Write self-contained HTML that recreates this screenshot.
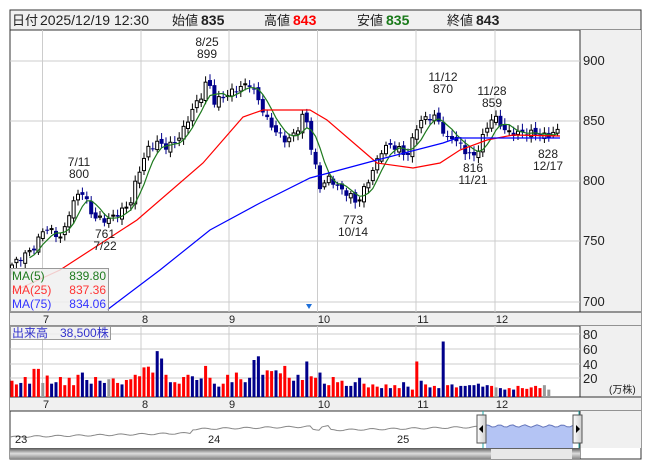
<!DOCTYPE html>
<html><head><meta charset="utf-8"><style>
body{margin:0;background:#fff;width:653px;height:470px;overflow:hidden;font-family:"Liberation Sans","Noto Sans CJK JP",sans-serif}
svg{position:absolute;left:0;top:0}
text{font-family:"Liberation Sans","Noto Sans CJK JP",sans-serif}
</style></head><body>
<svg id="s" width="653" height="470" xmlns="http://www.w3.org/2000/svg"></svg>
<script>
const S=document.getElementById('s');let h='';
function R(x,y,w,hh,f,st){h+=`<rect x="${x}" y="${y}" width="${w}" height="${hh}" fill="${f}"${st?` stroke="${st}"`:''}/>`}
function L(x1,y1,x2,y2,c,w){h+=`<line x1="${x1}" y1="${y1}" x2="${x2}" y2="${y2}" stroke="${c}" stroke-width="${w||1}"/>`}
function T(x,y,t,o){o=o||{};h+=`<text x="${x}" y="${y}" font-size="${o.s||12}" fill="${o.c||'#222'}" ${o.a?`text-anchor="${o.a}"`:''} ${o.b?'font-weight="bold"':''}>${t}</text>`}
function P(pts,c,w,f){h+=`<polyline points="${pts.map(p=>p[0].toFixed(1)+','+p[1].toFixed(1)).join(' ')}" fill="${f||'none'}" stroke="${c}" stroke-width="${w||1}"/>`}
R(10,10,631,449,'#fff','#333');
R(10.5,10.5,630,19,'#f0f0f0');L(10,30,641,30,'#333');
R(580,30,61,282,'#f0f0f0');L(580,30,580,312,'#333');
R(10,312,631,14,'#f0f0f0');L(10,312,641,312,'#333');L(10,326,641,326,'#333');
R(580,326,61,71,'#f0f0f0');L(580,326,580,397,'#333');
R(10,397,631,14,'#f0f0f0');L(10,397,641,397,'#333');L(10,411,641,411,'#333');
R(580,411,61,37,'#f0f0f0');L(580,411,580,459,'#333');
T(12,25,'日付',{s:13});T(40,25,'2025/12/19 12:30',{s:14});T(172,25,'始値',{s:13});T(201,25,'835',{s:14,b:1});
T(264,25,'高値',{s:13});T(293,25,'843',{s:14,b:1,c:'#f00'});T(357,25,'安値',{s:13});T(386,25,'835',{s:14,b:1,c:'#1a7a1a'});
T(447,25,'終値',{s:13});T(476,25,'843',{s:14,b:1});
const gx=[42.5,141,229,317.5,416,495];
gx.forEach(x=>{L(x,30,x,312,'#ccc');L(x,326,x,397,'#ccc');});
[61,121,181,241,302].forEach(y=>L(10,y,580,y,'#ccc'));
[334,349,364,378].forEach(y=>L(10,y,580,y,'#ccc'));
[[900,65],[850,125],[800,185],[750,245],[700,306]].forEach(a=>T(583,a[1],a[0],{s:13}));
[[80,339],[60,354],[40,369],[20,383]].forEach(a=>T(583,a[1],a[0],{s:13}));
T(609,393,'(万株)',{s:10});
const mx=[[46,'7'],[145,'8'],[232,'9'],[324,'10'],[423,'11'],[502,'12']];
mx.forEach(m=>{T(m[0],323,m[1],{s:11,a:'middle'});T(m[0],408,m[1],{s:11,a:'middle'});});
const kp=[[12,730],[35,745],[43,759],[48,760],[62,752],[70,776],[80,792],[83,790],[93,770],[107,767],[120,774],[130,781],[137,803],[147,826],[157,832],[167,828],[177,834],[185,845],[192,859],[203,873],[208,888],[213,865],[223,870],[240,878],[250,881],[257,870],[267,851],[277,840],[287,833],[297,842],[305,859],[310,832],[320,795],[330,803],[337,795],[350,788],[357,781],[367,798],[372,807],[382,826],[390,830],[400,826],[407,820],[418,848],[427,853],[437,853],[447,834],[453,837],[467,823],[475,820],[483,837],[492,853],[497,851],[507,840],[520,840],[533,840],[547,837],[559,843]];
function interp(x){for(let i=0;i<kp.length-1;i++){if(x<=kp[i+1][0]){const a=kp[i],b=kp[i+1];return a[1]+(b[1]-a[1])*(x-a[0])/(b[0]-a[0]);}}return kp[kp.length-1][1];}
const N=125,X=i=>12+i*4.4,Y=p=>61+(900-p)*1.2;
let C=[];for(let i=0;i<N;i++)C.push(interp(X(i))+Math.sin(i*2.3)*2.5);
C[N-1]=843;
let prev=C[0]-3;
for(let i=0;i<N;i++){const c=C[i];const o=prev+Math.sin(i*1.7)*2;const hi=Math.max(o,c)+2+Math.abs(Math.sin(i*3.1))*3;const lo=Math.min(o,c)-2-Math.abs(Math.cos(i*2.9))*3;
 const x=X(i);L(x,Y(hi),x,Y(lo),c>=o?'#000':'#00008b');
 const t=Y(Math.max(o,c)),b=Y(Math.min(o,c));const hh=Math.max(1,b-t);
 if(c>=o)h+=`<rect x="${x-1.5}" y="${t}" width="3" height="${hh}" fill="#fff" stroke="#000" stroke-width="1"/>`;else R(x-2,t,4,hh,'#00008b');
 prev=c;}
let m5=[];for(let i=4;i<N;i++){let s=0;for(let k=0;k<5;k++)s+=C[i-k];m5.push([X(i),Y(s/5)]);}P(m5,'#1e7a1e',1.2);
P([[12,292],[60,270],[137,220],[203,163],[243,117],[263,110],[310,110],[327,120],[377,163],[413,168],[440,163],[460,150],[487,140],[513,135],[560,136]],'#f00',1.2);
P([[107,310],[160,270],[210,230],[260,203],[310,178],[377,160],[443,143],[457,138],[560,138]],'#0000ff',1.2);
function lab2(x,y,a,b){T(x,y,a,{s:12,a:'middle'});T(x,y+12,b,{s:12,a:'middle'});}
lab2(207,46,'8/25','899');lab2(79,166,'7/11','800');lab2(443,81,'11/12','870');lab2(492,95,'11/28','859');
lab2(105,238,'761','7/22');lab2(353,224,'773','10/14');lab2(473,172,'816','11/21');lab2(548,158,'828','12/17');
h+=`<rect x="10.5" y="268.5" width="98" height="43" fill="rgba(240,240,240,0.85)" stroke="#999"/>`;
T(12,280,'MA(5)',{c:'#1e7a1e'});T(106,280,'839.80',{c:'#1e7a1e',a:'end'});
T(12,294,'MA(25)',{c:'#f33'});T(106,294,'837.36',{c:'#f33',a:'end'});
T(12,308,'MA(75)',{c:'#33f'});T(106,308,'834.06',{c:'#33f',a:'end'});
h+=`<polygon points="306,304 312,304 309,309" fill="#1e6fd9"/>`;
const V=[22,17,19,27,18,38,38,19,29,18,20,27,16,26,16,30,33,23,18,27,22,19,24,25,19,17,23,24,30,28,40,41,33,62,52,30,20,20,18,27,30,28,23,25,42,26,18,14,18,30,20,33,24,20,26,50,55,30,36,35,36,32,42,26,22,30,23,48,28,26,33,18,16,27,20,22,15,15,20,26,18,13,17,14,12,17,12,16,12,20,14,10,48,22,17,13,15,12,75,16,17,13,15,15,16,16,18,14,16,15,13,12,10,12,10,15,12,11,13,15,12,16,10];
let VC='rrbrbrrgrbbrrrrrbbbrbbgrrbrrrrrrrbbrbrrrrbbbrrbbrrbrrbbbbbrrbrrrbbrbrrbbrrrrbbbbrrrrbrbrrbbrbbbbbrrrrrbbbbbbbrgbbrbrrrrrr'.split('');
VC[92]='r';VC[93]='b';VC[94]='r';VC[95]='b';VC[96]='r';VC[97]='b';VC[98]='b';VC[99]='r';VC[100]='b';
for(let i=0;i<V.length&&i<N;i++){const c=VC[i]==='r'?'#f00':VC[i]==='b'?'#00008b':'#999';const hh=V[i]*0.74;R(X(i)-1.5,397-hh,3,hh,c);}
h+=`<rect x="10.5" y="326.5" width="100" height="13" fill="rgba(240,240,240,0.85)" stroke="#999"/>`;
T(12,337,'出来高　38,500株',{s:12,c:'#33c'});
let np=[];for(let x=10;x<=480;x+=3){let y=437-(x-10)/470*10+Math.sin(x*0.3)*0.8;if(x>190&&x<330)y-=4;if(x>310&&x<322)y+=3;np.push([x,y]);}
P(np,'#888',1);
let sp=[[486,448]];for(let x=486;x<=573;x+=3)sp.push([x,426+Math.sin(x*0.5)*1.2]);sp.push([573,448]);
h+=`<polygon points="${sp.map(p=>p.join(',')).join(' ')}" fill="#b4c4f4"/>`;P(sp.slice(1,-1),'#6677bb',1);
L(483,411,483,459,'#2aa');L(579,411,579,459,'#2aa');
T(15,443,'23',{s:11});T(208,443,'24',{s:11});T(397,443,'25',{s:11});
h+=`<defs><linearGradient id="g" x1="0" x2="0" y1="0" y2="1"><stop offset="0" stop-color="#555"/><stop offset="0.5" stop-color="#ddd"/><stop offset="1" stop-color="#888"/></linearGradient><linearGradient id="k" x1="0" x2="1"><stop offset="0" stop-color="#fff"/><stop offset="1" stop-color="#ccc"/></linearGradient></defs>`;
R(10,448,570,11,'url(#g)');R(491,449,81,10,'#e8e8e8');
R(477,415,9,28,'url(#k)','#555');R(573,415,9,28,'url(#k)','#555');
h+=`<polygon points="483,425 483,433 479,429" fill="#000"/><polygon points="576,425 576,433 580,429" fill="#000"/>`;
S.innerHTML=h;
</script>
</body></html>
